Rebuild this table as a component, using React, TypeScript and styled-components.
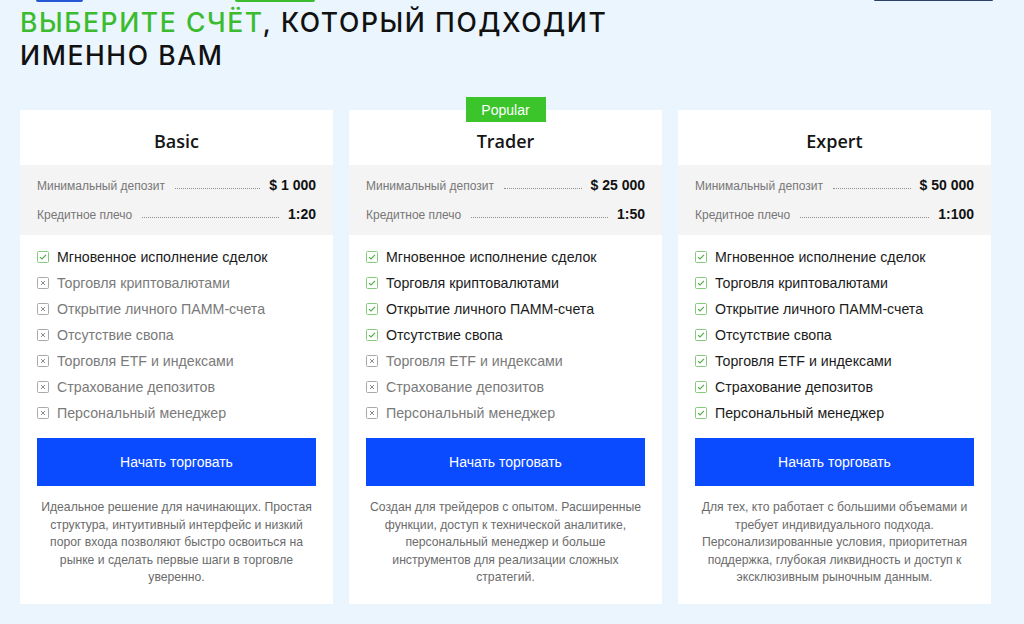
import React from "react";
import styled, { createGlobalStyle } from "styled-components";

const Global = createGlobalStyle`
  html, body { margin: 0; padding: 0; }
  body {
    background: #eaf5fe;
    font-family: "Liberation Sans", Arial, sans-serif;
    width: 1024px;
    height: 624px;
    overflow: hidden;
  }
  * { box-sizing: border-box; }
`;

const Page = styled.div`
  width: 1024px;
  height: 624px;
  background: #eaf5fe;
  display: flex;
  flex-direction: column;
`;

const TopStrip = styled.div`
  height: 3px;
  display: flex;
  align-items: flex-start;
`;

const StripBar = styled.div<{ $w: number; $ml: number; $c: string; $h: number }>`
  width: ${(p) => p.$w}px;
  margin-left: ${(p) => p.$ml}px;
  height: ${(p) => p.$h}px;
  background: ${(p) => p.$c};
  border-radius: 0 0 2px 2px;
`;

const Heading = styled.h1`
  margin: 3px 0 0 20px;
  font-family: Inter, "Noto Sans", sans-serif;
  font-weight: 550;
  font-size: 26.5px;
  line-height: 33px;
  letter-spacing: 1.6px;
  text-transform: uppercase;
  color: #111;
`;

const Green = styled.span`
  color: #3dbb2f;
`;

const Cards = styled.div`
  margin: 38px 0 0 20px;
  display: flex;
  gap: 16px;
`;

const Card = styled.div`
  position: relative;
  width: 313px;
  height: 494px;
  background: #fff;
  display: flex;
  flex-direction: column;
`;

const Badge = styled.div`
  position: absolute;
  top: -13px;
  left: 50%;
  transform: translateX(-50%);
  width: 80px;
  height: 25px;
  background: #3cc42b;
  color: #fff;
  font-size: 14px;
  display: flex;
  align-items: center;
  justify-content: center;
`;

const Title = styled.div`
  height: 55px;
  display: flex;
  align-items: center;
  justify-content: center;
  padding-top: 6px;
  font-family: "Open Sans", sans-serif;
  font-weight: 600;
  font-size: 18px;
  color: #151515;
`;

const Specs = styled.div`
  background: #f4f4f4;
  padding: 6px 17px 6px 17px;
`;

const SpecRow = styled.div`
  display: flex;
  align-items: baseline;
  height: 29px;
  line-height: 29px;
`;

const SpecLabel = styled.span`
  font-size: 12px;
  color: #777;
`;

const Leader = styled.span`
  flex: 1;
  margin: 0 9px 0 10px;
  border-bottom: 1px dotted #8f8f8f;
  height: 1px;
  transform: translateY(-1px);
`;

const SpecValue = styled.span`
  font-size: 14px;
  font-weight: 700;
  color: #111;
`;

const Features = styled.ul`
  list-style: none;
  margin: 0;
  padding: 9px 17px 0 17px;
`;

const Feature = styled.li<{ $on: boolean }>`
  display: flex;
  align-items: center;
  height: 26px;
  font-size: 14.2px;
  color: ${(p) => (p.$on ? "#1b1b1b" : "#7a7a7a")};
  gap: 8px;
`;

const Button = styled.button`
  margin: 12px 17px 0 17px;
  height: 48px;
  border: 0;
  background: #0a4bff;
  color: #fff;
  font-family: "Liberation Sans", Arial, sans-serif;
  font-size: 14px;
  cursor: pointer;
`;

const Desc = styled.p`
  margin: 13px 19px 0 19px;
  font-size: 12.2px;
  line-height: 17.5px;
  color: #6b6b6b;
  text-align: center;
`;

const Check = ({ on }: { on: boolean }) =>
  on ? (
    <svg width="12" height="12" viewBox="0 0 12 12" style={{ flex: "none" }}>
      <rect x="0.5" y="0.5" width="11" height="11" rx="1" fill="#fff" stroke="#86c97f" />
      <path d="M3 6.1 L5 8 L9 3.8" fill="none" stroke="#4cb043" strokeWidth="1.1" />
    </svg>
  ) : (
    <svg width="12" height="12" viewBox="0 0 12 12" style={{ flex: "none" }}>
      <rect x="0.5" y="0.5" width="11" height="11" rx="1" fill="#fff" stroke="#a9a9a9" />
      <path d="M4 4 L8 8 M8 4 L4 8" fill="none" stroke="#8a8a8a" strokeWidth="1" />
    </svg>
  );

const FEATURES = [
  "Мгновенное исполнение сделок",
  "Торговля криптовалютами",
  "Открытие личного ПАММ-счета",
  "Отсутствие свопа",
  "Торговля ETF и индексами",
  "Страхование депозитов",
  "Персональный менеджер",
];

const PLANS = [
  {
    name: "Basic",
    deposit: "$ 1 000",
    leverage: "1:20",
    enabled: 1,
    popular: false,
    desc: "Идеальное решение для начинающих. Простая структура, интуитивный интерфейс и низкий порог входа позволяют быстро освоиться на рынке и сделать первые шаги в торговле уверенно.",
  },
  {
    name: "Trader",
    deposit: "$ 25 000",
    leverage: "1:50",
    enabled: 4,
    popular: true,
    desc: "Создан для трейдеров с опытом. Расширенные функции, доступ к технической аналитике, персональный менеджер и больше инструментов для реализации сложных стратегий.",
  },
  {
    name: "Expert",
    deposit: "$ 50 000",
    leverage: "1:100",
    enabled: 7,
    popular: false,
    desc: "Для тех, кто работает с большими объемами и требует индивидуального подхода. Персонализированные условия, приоритетная поддержка, глубокая ликвидность и доступ к эксклюзивным рыночным данным.",
  },
];

export default function App() {
  return (
    <Page>
      <Global />
      <TopStrip>
        <StripBar $w={47} $ml={36} $c="#2456d6" $h={2} />
        <StripBar $w={80} $ml={152} $c="#3dbb2f" $h={2} />
        <StripBar $w={119} $ml={559} $c="#2b3f6b" $h={1} />
      </TopStrip>
      <Heading>
        <Green>Выберите счёт</Green>, который подходит
        <br />
        именно вам
      </Heading>
      <Cards>
        {PLANS.map((p) => (
          <Card key={p.name}>
            {p.popular && <Badge>Popular</Badge>}
            <Title>{p.name}</Title>
            <Specs>
              <SpecRow>
                <SpecLabel>Минимальный депозит</SpecLabel>
                <Leader />
                <SpecValue>{p.deposit}</SpecValue>
              </SpecRow>
              <SpecRow>
                <SpecLabel>Кредитное плечо</SpecLabel>
                <Leader />
                <SpecValue>{p.leverage}</SpecValue>
              </SpecRow>
            </Specs>
            <Features>
              {FEATURES.map((f, i) => (
                <Feature key={f} $on={i < p.enabled}>
                  <Check on={i < p.enabled} />
                  {f}
                </Feature>
              ))}
            </Features>
            <Button>Начать торговать</Button>
            <Desc>{p.desc}</Desc>
          </Card>
        ))}
      </Cards>
    </Page>
  );
}
